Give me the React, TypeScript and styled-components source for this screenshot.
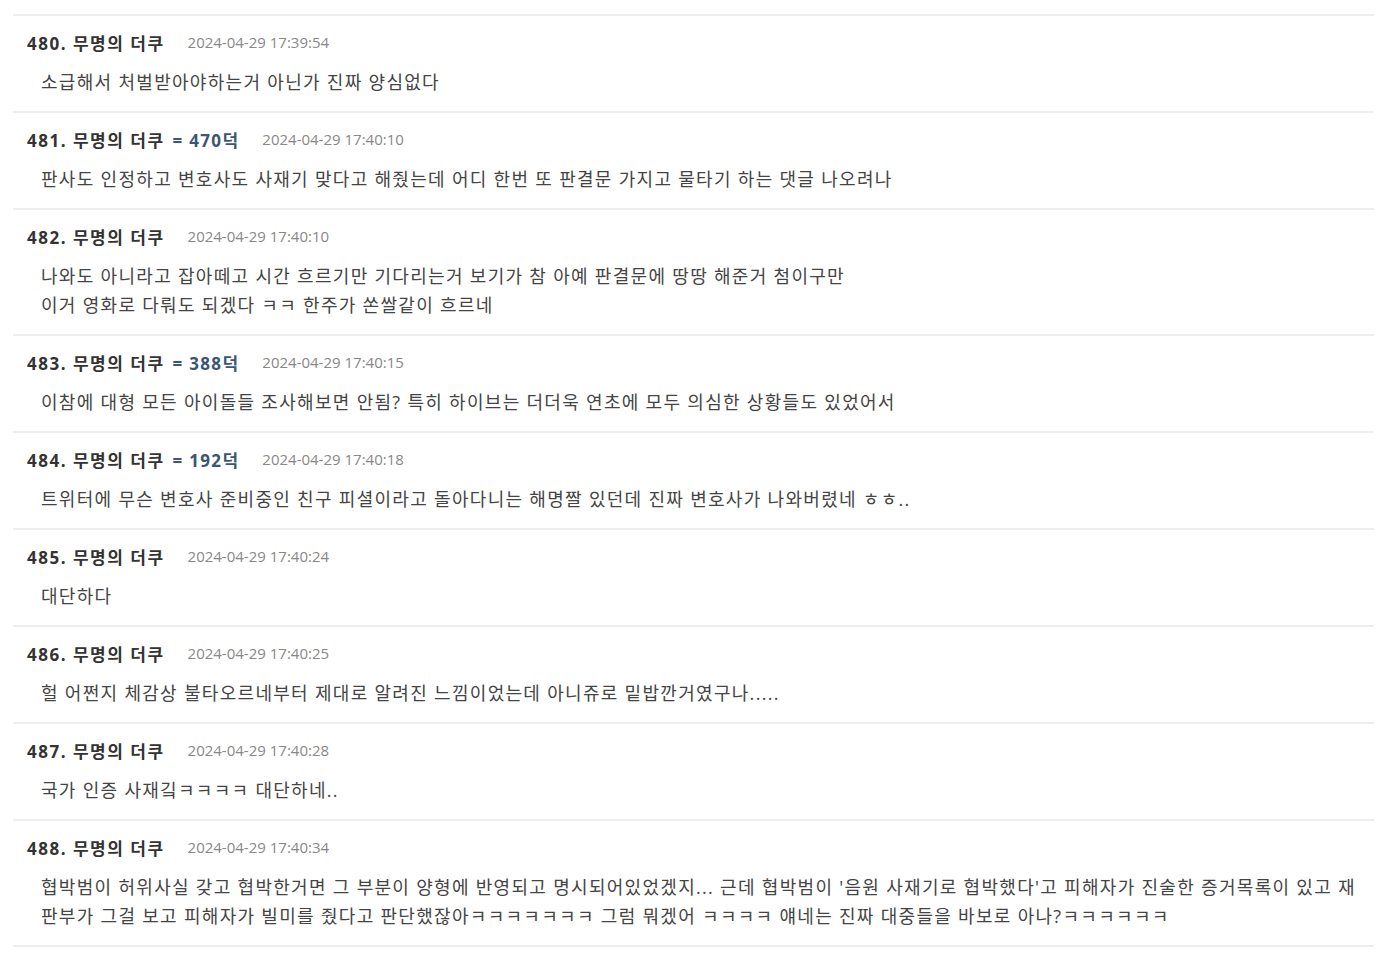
import * as React from "react"
import styled, { createGlobalStyle } from "styled-components";

interface Comment {
    no: number;
    points?: number;
    time: string;
    lines: string[];
}

const comments: Comment[] = [
    { no: 480, time: "2024-04-29 17:39:54", lines: ["소급해서 처벌받아야하는거 아닌가 진짜 양심없다"] },
    { no: 481, points: 470, time: "2024-04-29 17:40:10", lines: ["판사도 인정하고 변호사도 사재기 맞다고 해줬는데 어디 한번 또 판결문 가지고 물타기 하는 댓글 나오려나"] },
    { no: 482, time: "2024-04-29 17:40:10", lines: ["나와도 아니라고 잡아떼고 시간 흐르기만 기다리는거 보기가 참 아예 판결문에 땅땅 해준거 첨이구만", "이거 영화로 다뤄도 되겠다 ㅋㅋ 한주가 쏜쌀같이 흐르네"] },
    { no: 483, points: 388, time: "2024-04-29 17:40:15", lines: ["이참에 대형 모든 아이돌들 조사해보면 안됨? 특히 하이브는 더더욱 연초에 모두 의심한 상황들도 있었어서"] },
    { no: 484, points: 192, time: "2024-04-29 17:40:18", lines: ["트위터에 무슨 변호사 준비중인 친구 피셜이라고 돌아다니는 해명짤 있던데 진짜 변호사가 나와버렸네 ㅎㅎ.."] },
    { no: 485, time: "2024-04-29 17:40:24", lines: ["대단하다"] },
    { no: 486, time: "2024-04-29 17:40:25", lines: ["헐 어쩐지 체감상 불타오르네부터 제대로 알려진 느낌이었는데 아니쥬로 밑밥깐거였구나....."] },
    { no: 487, time: "2024-04-29 17:40:28", lines: ["국가 인증 사재깈ㅋㅋㅋㅋ 대단하네.."] },
    { no: 488, time: "2024-04-29 17:40:34", lines: ["협박범이 허위사실 갖고 협박한거면 그 부분이 양형에 반영되고 명시되어있었겠지... 근데 협박범이 '음원 사재기로 협박했다'고 피해자가 진술한 증거목록이 있고 재판부가 그걸 보고 피해자가 빌미를 줬다고 판단했잖아ㅋㅋㅋㅋㅋㅋㅋ 그럼 뭐겠어 ㅋㅋㅋㅋ 얘네는 진짜 대중들을 바보로 아나?ㅋㅋㅋㅋㅋㅋ"] },
];

export default class App extends React.Component {
    render() {
        return (
            <>
                <GlobalStyle />
                <Page>
                    <List>
                        {comments.map(c => (
                            <Item key={c.no}>
                                <Header>
                                    <Name>{c.no}. 무명의 더쿠</Name>
                                    {c.points !== undefined && <Points>= {c.points}덕</Points>}
                                    <Time>{c.time}</Time>
                                </Header>
                                <Body>
                                    {c.lines.map((l, i) => <p key={i}>{l}</p>)}
                                </Body>
                            </Item>
                        ))}
                    </List>
                </Page>
            </>
        );
    }
}

const GlobalStyle = createGlobalStyle`
    body {
        margin: 0;
        background: #fff;
        font-family: "Open Sans", "Noto Sans CJK KR", sans-serif;
    }
`;

const Page = styled.div`
    padding: 14px 12px 0 13px;
`;

const List = styled.div`
    display: flex;
    flex-direction: column;
    border-bottom: 2px solid #eee;
`;

const Item = styled.div`
    border-top: 2px solid #eee;
    padding: 14px 0 14px 14px;
`;

const Header = styled.div`
    display: flex;
    align-items: center;
    height: 24px;
    white-space: nowrap;
`;

const Name = styled.span`
    font-size: 17px;
    font-weight: 700;
    letter-spacing: 1.5px;
    color: #333;
`;

const Points = styled.span`
    font-size: 17px;
    font-weight: 700;
    letter-spacing: 1.3px;
    color: #3b5675;
    margin-left: 8px;
`;

const Time = styled.span`
    font-size: 15px;
    color: #888;
    margin-left: 23px;
`;

const Body = styled.div`
    margin: 14px 14px 0 14px;
    font-size: 18px;
    line-height: 29px;
    letter-spacing: 1.3px;
    word-break: break-all;
    color: #444;
    p {
        margin: 0;
    }
`;
